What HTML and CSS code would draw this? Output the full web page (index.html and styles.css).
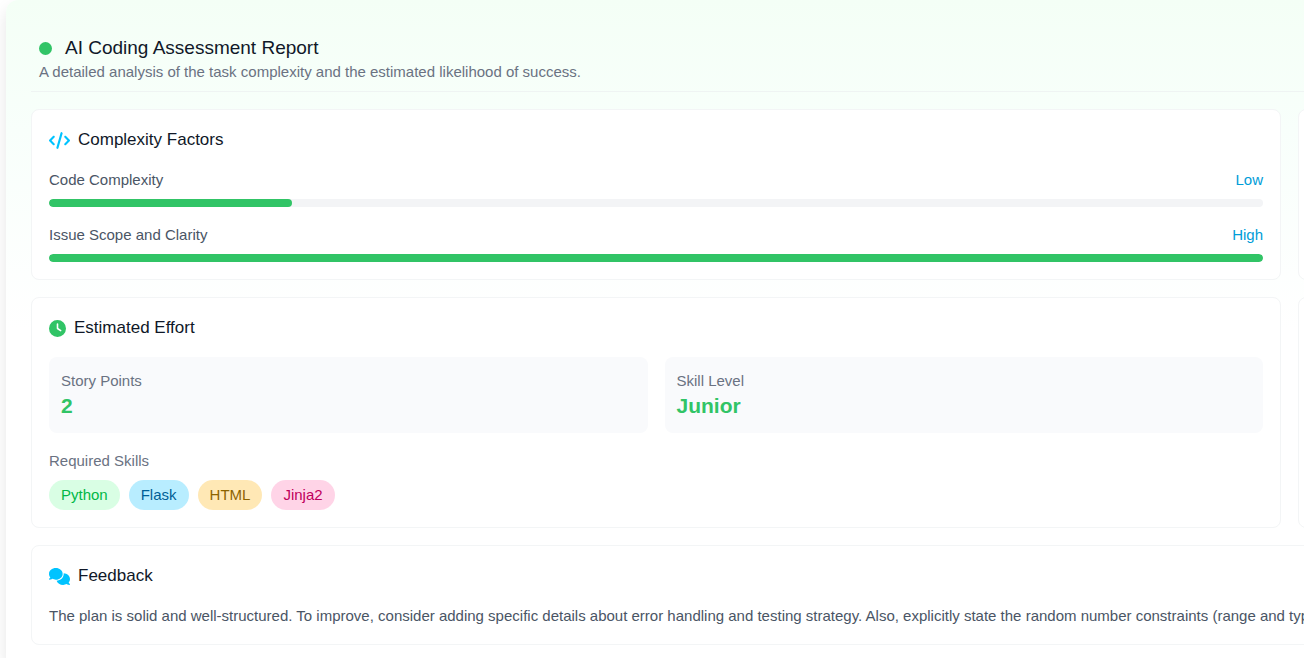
FILE: index.html
```html
<!DOCTYPE html>
<html lang="en">
<head>
<meta charset="utf-8">
<title>AI Coding Assessment Report</title>
<link rel="stylesheet" href="styles.css">
</head>
<body>
<main class="report">
  <header class="report-header">
    <h1 class="report-title"><span class="status-dot"></span>AI Coding Assessment Report</h1>
    <p class="report-subtitle">A detailed analysis of the task complexity and the estimated likelihood of success.</p>
  </header>
  <div class="cards">
    <section class="card">
      <h2 class="card-title">
        <svg class="icon icon-wide icon-blue" viewBox="0 0 640 512" aria-hidden="true"><path d="M392.800 1.200c-17-4.900-34.700 5-39.600 22l-128 448c-4.900 17 5 34.700 22 39.600s34.700-5 39.600-22l128-448c4.900-17-5-34.700-22-39.600zm80.600 120.100c-12.500 12.500-12.500 32.800 0 45.300L562.700 256l-89.400 89.400c-12.500 12.500-12.500 32.800 0 45.300s32.800 12.500 45.300 0l112-112c12.500-12.500 12.500-32.800 0-45.300l-112-112c-12.500-12.500-32.800-12.500-45.300 0zm-306.700 0c-12.500-12.500-32.800-12.500-45.300 0l-112 112c-12.500 12.500-12.500 32.800 0 45.300l112 112c12.500 12.500 32.800 12.500 45.300 0s12.500-32.800 0-45.300L77.300 256l89.400-89.400c12.500-12.500 12.500-32.800 0-45.300z"/></svg>
        Complexity Factors
      </h2>
      <div class="factors">
        <div class="factor">
          <div class="factor-row"><span>Code Complexity</span><span class="factor-level">Low</span></div>
          <div class="track"><div class="fill" style="width: 20%"></div></div>
        </div>
        <div class="factor">
          <div class="factor-row"><span>Issue Scope and Clarity</span><span class="factor-level">High</span></div>
          <div class="track"><div class="fill" style="width: 100%"></div></div>
        </div>
      </div>
    </section>
    <section class="card"></section>
    <section class="card">
      <h2 class="card-title">
        <svg class="icon icon-green" viewBox="0 0 512 512" aria-hidden="true"><path d="M256 0a256 256 0 1 1 0 512A256 256 0 1 1 256 0zM232 120V256c0 8 4 15.500 10.700 20l96 64c11 7.400 25.900 4.400 33.300-6.700s4.400-25.900-6.700-33.300L280 243.200V120c0-13.300-10.700-24-24-24s-24 10.700-24 24z"/></svg>
        Estimated Effort
      </h2>
      <div class="tiles">
        <div class="tile"><div class="label">Story Points</div><div class="value">2</div></div>
        <div class="tile"><div class="label">Skill Level</div><div class="value">Junior</div></div>
      </div>
      <div class="skills">
        <div class="label">Required Skills</div>
        <ul class="pills">
          <li class="pill pill-green">Python</li>
          <li class="pill pill-blue">Flask</li>
          <li class="pill pill-amber">HTML</li>
          <li class="pill pill-pink">Jinja2</li>
        </ul>
      </div>
    </section>
    <section class="card"></section>
    <section class="card card-full">
      <h2 class="card-title">
        <svg class="icon icon-wide icon-blue" viewBox="0 0 640 512" aria-hidden="true"><path d="M208 352c114.900 0 208-78.800 208-176S322.900 0 208 0S0 78.800 0 176c0 38.600 14.700 74.300 39.600 103.400c-3.500 9.400-8.700 17.700-14.200 24.700c-4.800 6.200-9.700 11-13.300 14.300c-1.800 1.600-3.300 2.900-4.300 3.700c-.5 .4-.9 .7-1.100 .8C.9 327.200-1.400 334.400 .8 340.900S9.100 352 16 352c21.800 0 43.800-5.600 62.100-12.500c9.200-3.500 17.800-7.400 25.300-11.400C134.100 343.300 169.800 352 208 352zM448 176c0 112.300-99.100 196.900-216.500 207C255.800 457.400 336.400 512 432 512c38.200 0 73.900-8.700 104.700-23.900c7.500 4 16 7.900 25.200 11.400c18.300 6.900 40.300 12.500 62.100 12.500c6.900 0 13.100-4.500 15.200-11.100c2.100-6.600-.2-13.800-5.800-17.900c-.6-.4-2.200-1.500-5.400-4.500c-3.600-3.300-8.500-8.100-13.300-14.300c-5.500-7-10.700-15.400-14.200-24.700c24.900-29 39.600-64.700 39.600-103.400c0-92.800-84.900-168.900-192.600-175.500c.4 5.100 .6 10.300 .6 15.500z"/></svg>
        Feedback
      </h2>
      <p class="feedback">The plan is solid and well-structured. To improve, consider adding specific details about error handling and testing strategy. Also, explicitly state the random number constraints (range and type)</p>
    </section>
  </div>
</main>
</body>
</html>
```
FILE: styles.css
```css
* { box-sizing: border-box; }

body {
  margin: 0;
  padding-left: 6px;
  overflow: hidden;
  background: #fff;
  color: #4a5565;
  font: 15px/22px "Liberation Sans", Arial, sans-serif;
}

h1, h2, p, ul { margin: 0; padding: 0; font-weight: 400; }

.report {
  width: max-content;
  min-height: 100vh;
  padding: 35px 25px 14px;
  border-radius: 12px 0 0 0;
  background: linear-gradient(to bottom, #f4fff6 0, #f8fffb 130px, #fff 330px);
  box-shadow: 0 8px 16px rgba(0, 0, 0, .1);
}

.report-header {
  padding: 0 8px 8px;
  border-bottom: 1px solid #eff4f3;
}

.report-title {
  display: flex;
  align-items: center;
  gap: 13px;
  color: #101828;
  font-size: 19px;
  line-height: 26px;
}

.status-dot {
  width: 13px;
  height: 13px;
  border-radius: 50%;
  background: #31c466;
}

.report-subtitle { color: #6a7282; }

.cards {
  display: grid;
  grid-template-columns: repeat(2, calc(100vw - 54px));
  gap: 17px;
  padding-top: 17px;
}

.card {
  padding: 18px 17px 17px;
  border: 1px solid #f3f5f6;
  border-radius: 8px;
  background: #fff;
}

.card-full { grid-column: 1 / -1; }

.card-title {
  display: flex;
  align-items: center;
  gap: 8px;
  margin-bottom: 17px;
  color: #101828;
  font-size: 17px;
  line-height: 24px;
}

.icon { width: 17px; height: 17px; fill: currentColor; }
.icon-wide { width: 21px; }
.icon-blue { color: #00c3ff; }
.icon-green { color: #31c466; }

.factors { display: grid; gap: 17px; }
.factor { display: grid; gap: 8px; }
.factor-row { display: flex; justify-content: space-between; }
.factor-level { color: #009dd8; }

.track {
  height: 8px;
  overflow: hidden;
  border-radius: 4px;
  background: #f3f4f6;
}

.fill { height: 100%; border-radius: 4px; background: #31c466; }

.tiles { display: grid; grid-template-columns: 1fr 1fr; gap: 17px; }
.tile { padding: 13px 12px; border-radius: 8px; background: #f9fafc; }
.label { color: #6a7282; }

.value {
  color: #31c466;
  font-size: 21px;
  font-weight: 700;
  line-height: 28px;
}

.skills { display: grid; gap: 8px; margin-top: 17px; }
.pills { display: flex; gap: 9px; list-style: none; }
.pill { padding: 4px 12px; border-radius: 15px; }
.pill-green { background: #d9fee4; color: #00b846; }
.pill-blue { background: #b8edff; color: #005f96; }
.pill-amber { background: #ffe8b5; color: #8d6400; }
.pill-pink { background: #ffd4e7; color: #bf005c; }

.feedback { white-space: nowrap; }
```
